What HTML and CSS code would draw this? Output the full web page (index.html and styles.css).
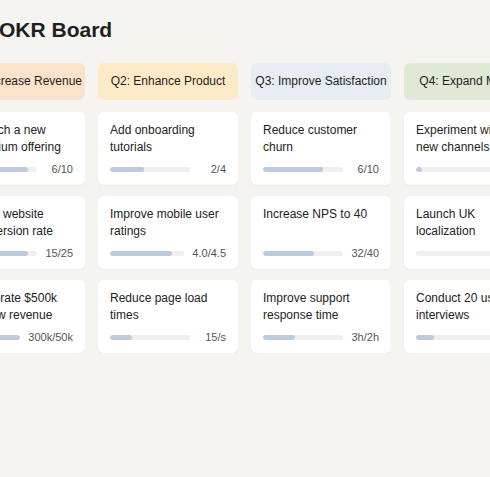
FILE: index.html
```html
<!DOCTYPE html>
<html lang="en">
  <head>
    <meta charset="UTF-8" />
    <meta name="viewport" content="width=device-width, initial-scale=1.0" />
    <title>OKR Board</title>
    <link rel="stylesheet" href="styles.css">
  </head>
  <body>
    <div class="page">
      <h1 class="title">OKR Board</h1>
      <div class="board">
        <div class="column">
          <div class="column-head q1">Q1: Increase Revenue</div>
          <div class="card">
            <div class="card-title">Launch a new premium offering</div>
            <div class="progress">
              <div class="bar"><div class="fill" style="width: 86%"></div></div>
              <span class="value">6/10</span>
            </div>
          </div>
          <div class="card">
            <div class="card-title">Grow website conversion rate</div>
            <div class="progress">
              <div class="bar"><div class="fill" style="width: 86%"></div></div>
              <span class="value">15/25</span>
            </div>
          </div>
          <div class="card">
            <div class="card-title">Generate $500k in new revenue</div>
            <div class="progress">
              <div class="bar"><div class="fill" style="width: 100%"></div></div>
              <span class="value">300k/50k</span>
            </div>
          </div>
        </div>
        <div class="column">
          <div class="column-head q2">Q2: Enhance Product</div>
          <div class="card">
            <div class="card-title">Add onboarding tutorials</div>
            <div class="progress">
              <div class="bar"><div class="fill" style="width: 42%"></div></div>
              <span class="value">2/4</span>
            </div>
          </div>
          <div class="card">
            <div class="card-title">Improve mobile user ratings</div>
            <div class="progress">
              <div class="bar"><div class="fill" style="width: 83%"></div></div>
              <span class="value">4.0/4.5</span>
            </div>
          </div>
          <div class="card">
            <div class="card-title">Reduce page load times</div>
            <div class="progress">
              <div class="bar"><div class="fill" style="width: 28%"></div></div>
              <span class="value">15/s</span>
            </div>
          </div>
        </div>
        <div class="column">
          <div class="column-head q3">Q3: Improve Satisfaction</div>
          <div class="card">
            <div class="card-title">Reduce customer churn</div>
            <div class="progress">
              <div class="bar"><div class="fill" style="width: 75%"></div></div>
              <span class="value">6/10</span>
            </div>
          </div>
          <div class="card">
            <div class="card-title">Increase NPS to 40</div>
            <div class="progress">
              <div class="bar"><div class="fill" style="width: 64%"></div></div>
              <span class="value">32/40</span>
            </div>
          </div>
          <div class="card">
            <div class="card-title">Improve support response time</div>
            <div class="progress">
              <div class="bar"><div class="fill" style="width: 40%"></div></div>
              <span class="value">3h/2h</span>
            </div>
          </div>
        </div>
        <div class="column">
          <div class="column-head q4">Q4: Expand Markets</div>
          <div class="card">
            <div class="card-title">Experiment with new channels</div>
            <div class="progress">
              <div class="bar"><div class="fill" style="width: 8%"></div></div>
              <span class="value">1/10</span>
            </div>
          </div>
          <div class="card">
            <div class="card-title">Launch UK localization</div>
            <div class="progress">
              <div class="bar"><div class="fill" style="width: 0%"></div></div>
              <span class="value">0/1</span>
            </div>
          </div>
          <div class="card">
            <div class="card-title">Conduct 20 user interviews</div>
            <div class="progress">
              <div class="bar"><div class="fill" style="width: 22%"></div></div>
              <span class="value">4/20</span>
            </div>
          </div>
        </div>
      </div>
    </div>
  </body>
</html>
```

FILE: styles.css
```css
* {
  margin: 0;
  padding: 0;
  box-sizing: border-box;
}
body {
  background-color: #f5f4f1;
  font-family: "Liberation Sans", Arial, sans-serif;
  color: #222;
  overflow: hidden;
}
.page {
  padding-top: 18px;
}
.title {
  font-size: 21px;
  font-weight: bold;
  line-height: 24px;
  color: #1f1f1f;
  text-indent: -1px;
}
.board {
  display: flex;
  gap: 13px;
  margin-top: 21px;
  margin-left: -41px;
}
.column {
  flex: 0 0 140px;
  display: flex;
  flex-direction: column;
  gap: 11px;
}
.column:first-child {
  flex-basis: 126px;
}
.column-head {
  height: 37px;
  line-height: 37px;
  border-radius: 6px;
  text-align: center;
  font-size: 12px;
  color: #1e1e1e;
  white-space: nowrap;
  margin-bottom: 1px;
}
.q1 {
  background-color: #fde2cb;
}
.q2 {
  background-color: #fdeac6;
}
.q3 {
  background-color: #e7edf2;
}
.q4 {
  background-color: #dfe9d6;
}
.card {
  height: 73px;
  background-color: #fff;
  border-radius: 6px;
  padding: 10px 12px 9px;
  box-shadow: 0 1px 2px rgba(0, 0, 0, 0.04);
  display: flex;
  flex-direction: column;
}
.card-title {
  font-size: 12px;
  line-height: 17px;
  height: 34px;
  padding-right: 6px;
}
.progress {
  display: flex;
  align-items: center;
  gap: 8px;
  margin-top: 6px;
  height: 14px;
}
.bar {
  flex: 1;
  height: 5px;
  border-radius: 3px;
  background-color: #efefef;
  overflow: hidden;
}
.fill {
  height: 100%;
  border-radius: 3px;
  background-color: #bccbdd;
}
.value {
  min-width: 28px;
  text-align: right;
  font-size: 11px;
  color: #555;
  white-space: nowrap;
}
```
